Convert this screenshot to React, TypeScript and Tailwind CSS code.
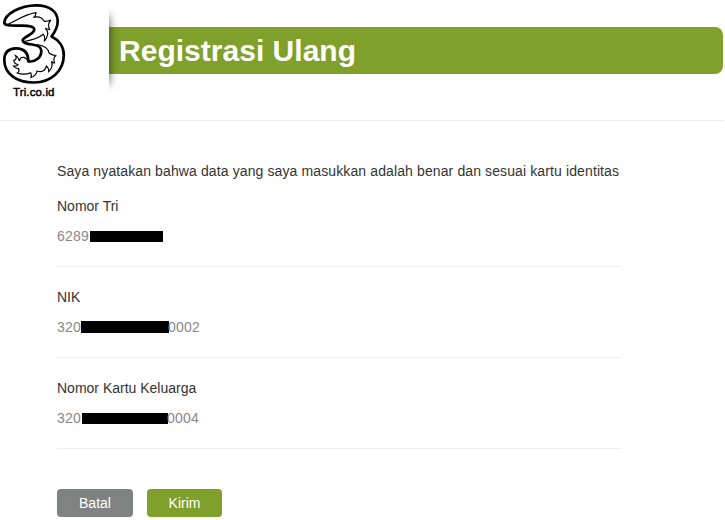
interface Field {
  label: string
  prefix: string
  suffix?: string
  mask: string
}

const fields: Field[] = [
  { label: 'Nomor Tri', prefix: '6289', mask: 'ml-px w-[73px] h-[11px]' },
  { label: 'NIK', prefix: '320', suffix: '0002', mask: 'w-[88px] h-3 -mr-px' },
  { label: 'Nomor Kartu Keluarga', prefix: '320', suffix: '0004', mask: 'ml-px -mr-px w-[86px] h-[11px]' },
]

export default function App() {
  return (
    <div className="h-[520px] w-[725px] overflow-hidden bg-white font-['Liberation_Sans',Arial,sans-serif] text-sm leading-5 text-[#333]">
      <Header />
      <main className="ml-[57px] w-[565px] pt-10">
        <p className="whitespace-nowrap tracking-[0.115px]">
          Saya nyatakan bahwa data yang saya masukkan adalah benar dan sesuai kartu identitas
        </p>
        <div className="mt-[15px]">
          {fields.map(field => (
            <FieldRow key={field.label} field={field} />
          ))}
        </div>
        <div className="flex gap-3.5 pt-5">
          <button className="h-7 w-[76px] rounded bg-[#808281] text-white">Batal</button>
          <button className="h-7 w-[75px] rounded bg-[#7fa02b] text-white">Kirim</button>
        </div>
      </main>
    </div>
  )
}

function Header() {
  return (
    <header className="flex h-[121px] w-[723px] items-start border-b border-[#eee]">
      <div className="relative z-10 h-[100px] w-[109px] shrink-0 bg-white">
        <TriLogo />
        <div className="absolute top-1 left-full h-[94px] w-3 overflow-hidden">
          <div className="absolute top-3 -left-3 h-[68px] w-3 shadow-[0_0_10px_rgba(0,0,0,0.65)]" />
        </div>
      </div>
      <div className="mt-[27px] flex h-[47px] flex-1 items-center rounded-r-lg bg-[#7fa02b] pl-2.5">
        <h1 className="text-[30px] leading-[47px] font-bold tracking-[0.02px] text-white">Registrasi Ulang</h1>
      </div>
    </header>
  )
}

function TriLogo() {
  return (
    <svg width="109" height="100" viewBox="0 0 109 100" fill="none" stroke="#000" strokeLinejoin="round">
      <path
        strokeWidth="2.7"
        d="M4.3 22.5C5 14 20 5.4 36 5.3C50 5.2 57.7 12 57.7 21C57.7 28 55 32 51.5 36.5C59 40 63.8 47 63.8 55C63.8 71 51 82.3 34 82.5C17 82.6 4.3 74 4.3 60C4.3 52 9 48.5 16 48.4C24 48.4 28.3 52.5 28.3 61.3C36 62.5 41.3 57 41.3 51C41.3 46.5 38 45.2 32 44.5C26 43.8 22.5 42.5 22.8 40C23.3 37 33.5 34.5 34.2 30C34.6 26.5 29 25.8 22 25.6C14 25.4 4.3 26.5 4.3 22.5Z"
      />
      <path
        strokeWidth="1.2"
        strokeLinejoin="miter"
        d="M7.5 24.5C17 20 26 14 36 12.7Q36 15 34.2 17.2Q41 15.5 44.3 21.3Q47.5 21.5 50.8 20Q47 24.5 49.6 29.3Q47.5 29.5 45.3 28.3Q48.5 31.5 47.5 35Q47 38 44.3 41.3Q45.5 37 43.2 34.3C38 39 30 40.5 24 41.5"
      />
      <path
        strokeWidth="1.2"
        strokeLinejoin="miter"
        d="M37 44.5C43 45.5 48.5 47.5 49.2 53.3Q52 55.5 56.3 55.5Q52.5 57.5 54.5 63Q53 63 51.5 61.5Q53.5 67 48.8 71.5Q48.8 68 46.5 66Q44 73.5 37 71Q36.5 75.5 31 77.5Q32 75 30.7 72.7Q24 75.5 17.3 73Q20 71.5 18.5 68.5Q15.5 69 13.5 66Q17 66.5 18 64.5Q14 64 13.7 60.3Q17.5 59.5 15.5 55.5Q18.5 57 19.5 61Q20 56.8 24 57.3Q27 58 28 61"
      />
      <text
        x="13"
        y="96"
        fill="#000"
        stroke="#000"
        strokeWidth="0.45"
        fontSize="11.5"
        textLength="41.5"
      >
        Tri.co.id
      </text>
    </svg>
  )
}

function FieldRow({ field }: { field: Field }) {
  return (
    <div className="mb-5 h-[71px] border-b border-[#eee]">
      <p>{field.label}</p>
      <div className="mt-2.5 flex items-center tracking-[0.2px] text-[#888]">
        <span>{field.prefix}</span>
        <span className={`bg-black ${field.mask}`} />
        <span>{field.suffix}</span>
      </div>
    </div>
  )
}
